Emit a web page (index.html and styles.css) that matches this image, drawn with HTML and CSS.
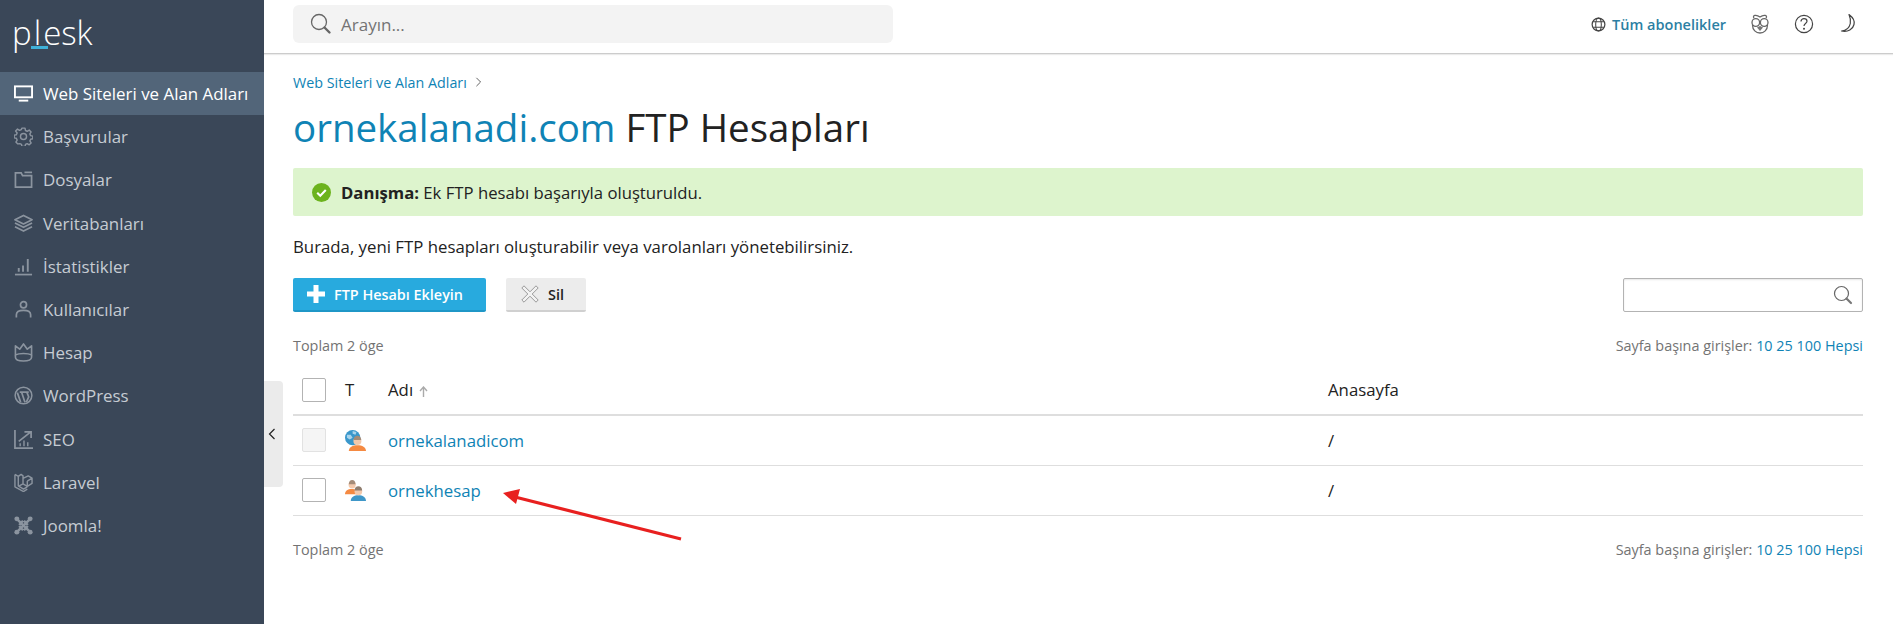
FILE: index.html
```html
<!DOCTYPE html>
<html lang="tr">
<head>
    <meta charset="UTF-8">
    <title>FTP Hesapları</title>
    <link rel="stylesheet" href="styles.css">
</head>
<body>
    <div class="layout">
        <aside class="sidebar">
            <div class="logo"><span>p</span><span class="logo-l">l</span><span>esk</span></div>
            <nav class="nav">
                <a class="nav-item active">
                    <svg class="nav-icon" viewBox="0 0 20 20"><rect x="1" y="2.500" width="18" height="11.500" fill="none" stroke="currentColor" stroke-width="2"/><rect x="5" y="16.500" width="10" height="2" fill="currentColor"/></svg>
                    Web Siteleri ve Alan Adları
                </a>
                <a class="nav-item">
                    <svg class="nav-icon" viewBox="0 0 20 20"><path d="M8.400 1.200h3.200l.5 2.500 1.800.8 2.100-1.300 2 2-1.300 2.100.8 1.800 2.300.5v2.800l-2.300.5-.8 1.800 1.300 2.100-2 2-2.100-1.300-1.800.8-.5 2.300H8.400l-.5-2.300-1.800-.8L4 17.800l-2-2 1.300-2.100-.8-1.800-2.300-.5V8.600l2.300-.5.800-1.800L1.700 4.200l2-2 2.100 1.300 1.800-.8z" fill="none" stroke="currentColor" stroke-width="1.500" stroke-linejoin="round"/><circle cx="10" cy="10" r="3.200" fill="none" stroke="currentColor" stroke-width="1.500"/></svg>
                    Başvurular
                </a>
                <a class="nav-item">
                    <svg class="nav-icon" viewBox="0 0 20 20"><path d="M1.500 18V3h6l1.500 3h9.500v12z" fill="none" stroke="currentColor" stroke-width="1.800"/><path d="M11 2.500h8" stroke="currentColor" stroke-width="1.800"/></svg>
                    Dosyalar
                </a>
                <a class="nav-item">
                    <svg class="nav-icon" viewBox="0 0 20 20"><path d="M10 1.500l9 4.500-9 4.500-9-4.500z" fill="none" stroke="currentColor" stroke-width="1.800" stroke-linejoin="round"/><path d="M1 9.500l9 4.500 9-4.500M1 13.500l9 4.500 9-4.500" fill="none" stroke="currentColor" stroke-width="1.800" stroke-linejoin="round"/></svg>
                    Veritabanları
                </a>
                <a class="nav-item">
                    <svg class="nav-icon" viewBox="0 0 20 20"><path d="M1 18.500h18" stroke="currentColor" stroke-width="1.800"/><path d="M5 15.500v-4M9.500 15.500V9M14.500 15.500V2" stroke="currentColor" stroke-width="2"/></svg>
                    İstatistikler
                </a>
                <a class="nav-item">
                    <svg class="nav-icon" viewBox="0 0 20 20"><circle cx="10" cy="5" r="3.200" fill="none" stroke="currentColor" stroke-width="1.800"/><path d="M2.500 18.500v-3c0-3 3-4.500 7.500-4.500s7.500 1.500 7.500 4.500v3" fill="none" stroke="currentColor" stroke-width="1.800"/></svg>
                    Kullanıcılar
                </a>
                <a class="nav-item">
                    <svg class="nav-icon" viewBox="0 0 20 20"><path d="M1.500 3l4.500 3.500L10 1l4 5.500L18.500 3v9.500c-2-1-5-1.500-8.500-1.500s-6.500.5-8.500 1.500z" fill="none" stroke="currentColor" stroke-width="1.700" stroke-linejoin="round"/><path d="M1.500 12.500V15c0 2.500 3 4 8.500 4s8.500-1.500 8.500-4v-2.500" fill="none" stroke="currentColor" stroke-width="1.700"/></svg>
                    Hesap
                </a>
                <a class="nav-item">
                    <svg class="nav-icon" viewBox="0 0 20 20"><circle cx="10" cy="10" r="8.800" fill="none" stroke="currentColor" stroke-width="1.600"/><path d="M3.500 7l3.500 10M6 6.500h5M8 6.500l3.500 10.500M11 6.500h4.500M13.500 6.500l2 5-2.500 5.500" fill="none" stroke="currentColor" stroke-width="1.800"/></svg>
                    WordPress
                </a>
                <a class="nav-item">
                    <svg class="nav-icon" viewBox="0 0 20 20"><path d="M1 0v19h19" fill="none" stroke="currentColor" stroke-width="1.800"/><path d="M5 12L17 2.500M11 2h7v6.500" fill="none" stroke="currentColor" stroke-width="1.800"/><path d="M6.500 17v-3M10.500 17v-6M14.500 17v-4" stroke="currentColor" stroke-width="1.500"/></svg>
                    SEO
                </a>
                <a class="nav-item">
                    <svg class="nav-icon" viewBox="0 0 20 20"><path d="M1 1.500l3.500 2v10l5.500 3.500 4-2.500M1 1.500v13l9 5 4-2.500M4.500 3.500L7.500 1.500 9.500 3v8.500l-5 2.500M9.500 11.500l4.500 2.500 5-3V5.500L15 3l-5 2.500M14 8.500l5-3M14 8.500v5" fill="none" stroke="currentColor" stroke-width="1.500" stroke-linejoin="round"/></svg>
                    Laravel
                </a>
                <a class="nav-item">
                    <svg class="nav-icon" viewBox="0 0 20 20"><path d="M4 4l12 12M16 4L4 16M5.500 9.500l4-4.500M10.500 15l4-4.500M5.500 10.500l4 4.500M10.500 5l4 4.500" fill="none" stroke="currentColor" stroke-width="2.600"/><circle cx="3" cy="3" r="2.600" fill="currentColor"/><circle cx="17" cy="3" r="2.600" fill="currentColor"/><circle cx="3" cy="17" r="2.600" fill="currentColor"/><circle cx="17" cy="17" r="2.600" fill="currentColor"/></svg>
                    Joomla!
                </a>
            </nav>
        </aside>

        <div class="collapse-handle">
            <svg viewBox="0 0 8 12" width="8" height="12"><path d="M6.500 1L1.500 6l5 5" fill="none" stroke="#222" stroke-width="1.200"/></svg>
        </div>

        <div class="main">
            <header class="topbar">
                <div class="search">
                    <svg class="search-icon" viewBox="0 0 22 22"><circle cx="9" cy="9" r="7.500" fill="none" stroke="#666" stroke-width="1.300"/><path d="M14.500 14.500l5 5" stroke="#666" stroke-width="2.400" stroke-linecap="round"/></svg>
                    <span>Arayın...</span>
                </div>
                <div class="top-actions">
                    <a class="subs">
                        <svg class="top-icon-sm" viewBox="0 0 16 16"><circle cx="8" cy="8" r="6.800" fill="none" stroke="#444" stroke-width="1.300"/><ellipse cx="8" cy="8" rx="3" ry="6.800" fill="none" stroke="#444" stroke-width="1.100"/><path d="M2.200 5h11.600M2.200 11h11.600" stroke="#444" stroke-width="1.100"/></svg>
                        Tüm abonelikler
                    </a>
                    <svg class="top-icon" viewBox="0 0 22 22"><path d="M5 5C3 2.500 7 1 11 4c4-3 8-1.500 6 1" fill="none" stroke="#666" stroke-width="1.300"/><circle cx="6.800" cy="9.500" r="3.800" fill="none" stroke="#666" stroke-width="1.300"/><circle cx="15.200" cy="9.500" r="3.800" fill="none" stroke="#666" stroke-width="1.300"/><path d="M3.500 12c0 5 3.500 8 7.500 8s7.500-3 7.500-8" fill="none" stroke="#666" stroke-width="1.300"/><path d="M8 14.500l3 3.500 3-3.500-3-1.500z" fill="#777"/></svg>
                    <svg class="top-icon" viewBox="0 0 22 22"><circle cx="11" cy="11" r="8.600" fill="none" stroke="#444" stroke-width="1.200"/><path d="M8 8.500c0-1.800 1.400-2.800 3-2.800s3 1 3 2.600c0 2.200-3 2.300-3 4.700" fill="none" stroke="#444" stroke-width="1.200"/><circle cx="11" cy="15.800" r="1" fill="#444"/></svg>
                    <svg class="top-icon" viewBox="0 0 22 22"><path d="M12 1.500c4 3 6 6 5 10-1 4.500-6 8-12.500 6.500 4.500-.5 8-3.500 8.800-7.500.5-3-.2-6.500-1.300-9z" fill="#fff" stroke="#444" stroke-width="1.200" stroke-linejoin="round"/></svg>
                </div>
            </header>

            <main class="content">
                <div class="breadcrumb">
                    <a>Web Siteleri ve Alan Adları</a>
                    <svg viewBox="0 0 8 12" width="7" height="10"><path d="M1.500 1l5 5-5 5" fill="none" stroke="#555" stroke-width="1.100"/></svg>
                </div>
                <h1 class="title"><a>ornekalanadi.com</a> FTP Hesapları</h1>

                <div class="alert">
                    <svg class="alert-icon" viewBox="0 0 20 20"><circle cx="10" cy="10" r="10" fill="#6cb31d"/><path d="M5.500 10.300l3.200 3.200 5.800-6.200" fill="none" stroke="#fff" stroke-width="2.200"/></svg>
                    <span><b>Danışma:</b> Ek FTP hesabı başarıyla oluşturuldu.</span>
                </div>

                <p class="intro">Burada, yeni FTP hesapları oluşturabilir veya varolanları yönetebilirsiniz.</p>

                <div class="toolbar">
                    <button class="btn btn-primary">
                        <svg viewBox="0 0 18 18" width="18" height="18"><path d="M6.500 0h5v6.500H18v5h-6.500V18h-5v-6.500H0v-5h6.500z" fill="#fff"/></svg>
                        FTP Hesabı Ekleyin
                    </button>
                    <button class="btn btn-default">
                        <svg viewBox="0 0 18 18" width="18" height="18"><path d="M3 .8L9 6.800l6-6 2.200 2.200-6 6 6 6-2.200 2.200-6-6-6 6L.8 15l6-6-6-6z" fill="#f2f2f2" stroke="#999" stroke-width="1"/></svg>
                        Sil
                    </button>
                    <div class="list-search">
                        <svg viewBox="0 0 20 20" width="20" height="20"><circle cx="8.500" cy="8.500" r="7" fill="none" stroke="#666" stroke-width="1.200"/><path d="M13.500 13.500l4.500 4.500" stroke="#777" stroke-width="2.200" stroke-linecap="round"/></svg>
                    </div>
                </div>

                <div class="list-meta list-meta-top">
                    <span>Toplam 2 öge</span>
                    <span>Sayfa başına girişler: <a>10</a> <a>25</a> <a>100</a> <a>Hepsi</a></span>
                </div>

                <table class="list">
                    <thead>
                        <tr>
                            <th class="col-check"><span class="checkbox"></span></th>
                            <th class="col-type">T</th>
                            <th class="col-name">Adı <svg class="sort" viewBox="0 0 9 11" width="9" height="11"><path d="M4.500 11V1.500M1 5l3.500-4L8 5" fill="none" stroke="#aaa" stroke-width="1.400"/></svg></th>
                            <th>Anasayfa</th>
                        </tr>
                    </thead>
                    <tbody>
                        <tr>
                            <td class="col-check"><span class="checkbox disabled"></span></td>
                            <td class="col-type">
                                <svg class="type-icon" viewBox="0 0 22 22"><circle cx="8" cy="8" r="8" fill="#3a97cb"/><path d="M2 5l4 0 2 3-3 2-3-2zM8 1l4 1-1 3-3-1z" fill="#a9d4ec"/><path d="M4 22c0-4 4-6 9-6s9 2 9 6z" fill="#f58a42"/><circle cx="13" cy="11.500" r="4.200" fill="#f3c9ac"/><path d="M9 10.500c0-3 1.800-4.500 4-4.500s4 1.500 4 4.500z" fill="#a58c78"/></svg>
                            </td>
                            <td class="col-name"><a>ornekalanadicom</a></td>
                            <td>/</td>
                        </tr>
                        <tr>
                            <td class="col-check"><span class="checkbox"></span></td>
                            <td class="col-type">
                                <svg class="type-icon" viewBox="0 0 22 22"><path d="M0 15c0-3.500 3-5.500 7-5.500s7 2 7 5.500z" fill="#f58a42"/><circle cx="7.500" cy="5" r="3.800" fill="#f3c9ac"/><path d="M4 4.500c0-3 1.500-4.500 3.500-4.500s3.500 1.500 3.500 4.500z" fill="#a58c78"/><path d="M6 22c0-4 3.500-6 8-6s8 2 8 6z" fill="#3f97c8"/><circle cx="14" cy="12" r="4" fill="#f3c9ac"/><path d="M10 11c0-3 1.800-4.500 4-4.500s4 1.500 4 4.500z" fill="#8f7d6e"/></svg>
                            </td>
                            <td class="col-name"><a>ornekhesap</a></td>
                            <td>/</td>
                        </tr>
                    </tbody>
                </table>

                <div class="list-meta list-meta-bottom">
                    <span>Toplam 2 öge</span>
                    <span>Sayfa başına girişler: <a>10</a> <a>25</a> <a>100</a> <a>Hepsi</a></span>
                </div>
            </main>
        </div>

        <svg class="arrow" viewBox="0 0 190 60" width="190" height="60"><path d="M182 50L16 8" stroke="#e8201f" stroke-width="3.200"/><path d="M4 4L21 0l-4 15z" fill="#e8201f"/></svg>
    </div>
</body>
</html>
```

FILE: styles.css
```css
* {
    box-sizing: border-box;
}
html, body {
    margin: 0;
    height: 100%;
}
body {
    font-family: "Open Sans", sans-serif;
    font-size: 16.8px;
    color: #222;
    background: #fff;
    overflow: hidden;
}
a {
    color: #0f83b5;
    text-decoration: none;
}
.layout {
    display: flex;
    height: 624px;
    position: relative;
}
.sidebar {
    width: 264px;
    flex-shrink: 0;
    background: #3a4758;
    color: #c6ccd3;
}
.logo {
    height: 72px;
    padding: 10px 0 0 12px;
    font-size: 33px;
    font-weight: 300;
    line-height: 46px;
    color: #fff;
}
.logo-l {
    display: inline-block;
    height: 46px;
    vertical-align: top;
    position: relative;
    padding: 0 2px;
}
.logo-l::after {
    content: "";
    position: absolute;
    left: -1px;
    right: -5px;
    top: 36px;
    height: 3px;
    background: #3fb0d8;
}
.nav-item {
    display: flex;
    align-items: center;
    gap: 10px;
    height: 43.2px;
    padding-left: 14px;
    color: #c6ccd3;
    font-size: 16.9px;
}
.nav-item.active {
    background: #526579;
    color: #fff;
}
.nav-icon {
    width: 19px;
    height: 19px;
    flex-shrink: 0;
    color: #8b949f;
}
.active .nav-icon {
    color: #fff;
}
.collapse-handle {
    position: absolute;
    left: 264px;
    top: 381px;
    width: 19px;
    height: 106px;
    background: #ebebeb;
    border-radius: 0 4px 4px 0;
    display: flex;
    align-items: center;
    padding-left: 4px;
}
.main {
    flex: 1;
    min-width: 0;
}
.topbar {
    height: 54px;
    display: flex;
    align-items: center;
    justify-content: space-between;
    padding: 0 34px 0 29px;
    border-bottom: 1px solid #ccc;
    box-shadow: 0 1px 1px rgba(0, 0, 0, 0.08);
}
.search {
    width: 600px;
    height: 38px;
    margin-bottom: 5px;
    background: #f3f3f3;
    border-radius: 6px;
    display: flex;
    align-items: center;
    gap: 9px;
    padding-left: 17px;
    color: #737373;
    font-size: 17px;
}
.search-icon {
    width: 22px;
    height: 22px;
}
.top-actions {
    display: flex;
    align-items: center;
    gap: 22px;
    margin-bottom: 5px;
}
.subs {
    display: flex;
    align-items: center;
    gap: 6px;
    margin-right: 1px;
    font-size: 14.5px;
    font-weight: 600;
    color: #2c7fa3;
}
.top-icon-sm {
    width: 15px;
    height: 15px;
}
.top-icon {
    width: 22px;
    height: 22px;
}
.content {
    padding: 0 30px 0 29px;
}
.breadcrumb {
    display: flex;
    align-items: center;
    gap: 8px;
    margin-top: 18px;
    height: 20px;
    font-size: 14.3px;
}
.title {
    margin: 12px 0 0;
    font-size: 38.5px;
    font-weight: 400;
    line-height: 46px;
    color: #222;
}
.alert {
    display: flex;
    align-items: center;
    gap: 10px;
    height: 48px;
    margin-top: 18px;
    padding-left: 19px;
    background: #ddf4cd;
    border-radius: 2px;
    font-size: 16.7px;
}
.alert-icon {
    width: 19px;
    height: 19px;
}
.intro {
    margin: 20px 0 0;
    line-height: 22px;
}
.toolbar {
    display: flex;
    align-items: center;
    gap: 20px;
    margin-top: 20px;
    height: 34px;
}
.btn {
    height: 34px;
    border: 0;
    border-radius: 2px;
    font-family: inherit;
    font-size: 14.4px;
    font-weight: 600;
    display: flex;
    align-items: center;
}
.btn-primary {
    width: 193px;
    gap: 9px;
    padding: 0 14px;
    color: #fff;
    background: #28aade;
    border-bottom: 2px solid #1f97c7;
}
.btn-default {
    width: 80px;
    gap: 9px;
    padding: 0 15px;
    color: #222;
    background: #ececec;
    border-bottom: 2px solid #d0d0d0;
}
.list-search {
    margin-left: auto;
    width: 240px;
    height: 34px;
    border: 1px solid #b3b3b3;
    border-radius: 2px;
    display: flex;
    align-items: center;
    justify-content: flex-end;
    padding-right: 9px;
    box-shadow: inset 0 1px 2px rgba(0, 0, 0, 0.1);
}
.list-meta {
    display: flex;
    justify-content: space-between;
    font-size: 14.4px;
    line-height: 20px;
    color: #737373;
}
.list-meta-top {
    margin-top: 24px;
}
.list-meta-bottom {
    margin-top: 24px;
}
.list {
    width: 100%;
    border-collapse: collapse;
    margin-top: 12px;
    table-layout: fixed;
}
.list th {
    height: 47px;
    padding-bottom: 4px;
    font-weight: 400;
    font-size: 16.8px;
    text-align: left;
    border-bottom: 2px solid #dedede;
}
.list td {
    height: 50px;
    border-bottom: 1px solid #dedede;
}
.col-check {
    width: 51px;
    padding-left: 9px;
}
.col-type {
    width: 43px;
}
.col-name {
    width: 940px;
}
.checkbox {
    display: block;
    width: 24px;
    height: 24px;
    border: 1px solid #b3b3b3;
    border-radius: 2px;
    background: #fff;
}
.checkbox.disabled {
    border-color: #e2e2e2;
    background: #f5f5f5;
}
.sort {
    margin-left: 2px;
    vertical-align: -1px;
}
.type-icon {
    display: block;
    width: 21px;
    height: 21px;
}
.arrow {
    position: absolute;
    left: 499px;
    top: 489px;
}
```
